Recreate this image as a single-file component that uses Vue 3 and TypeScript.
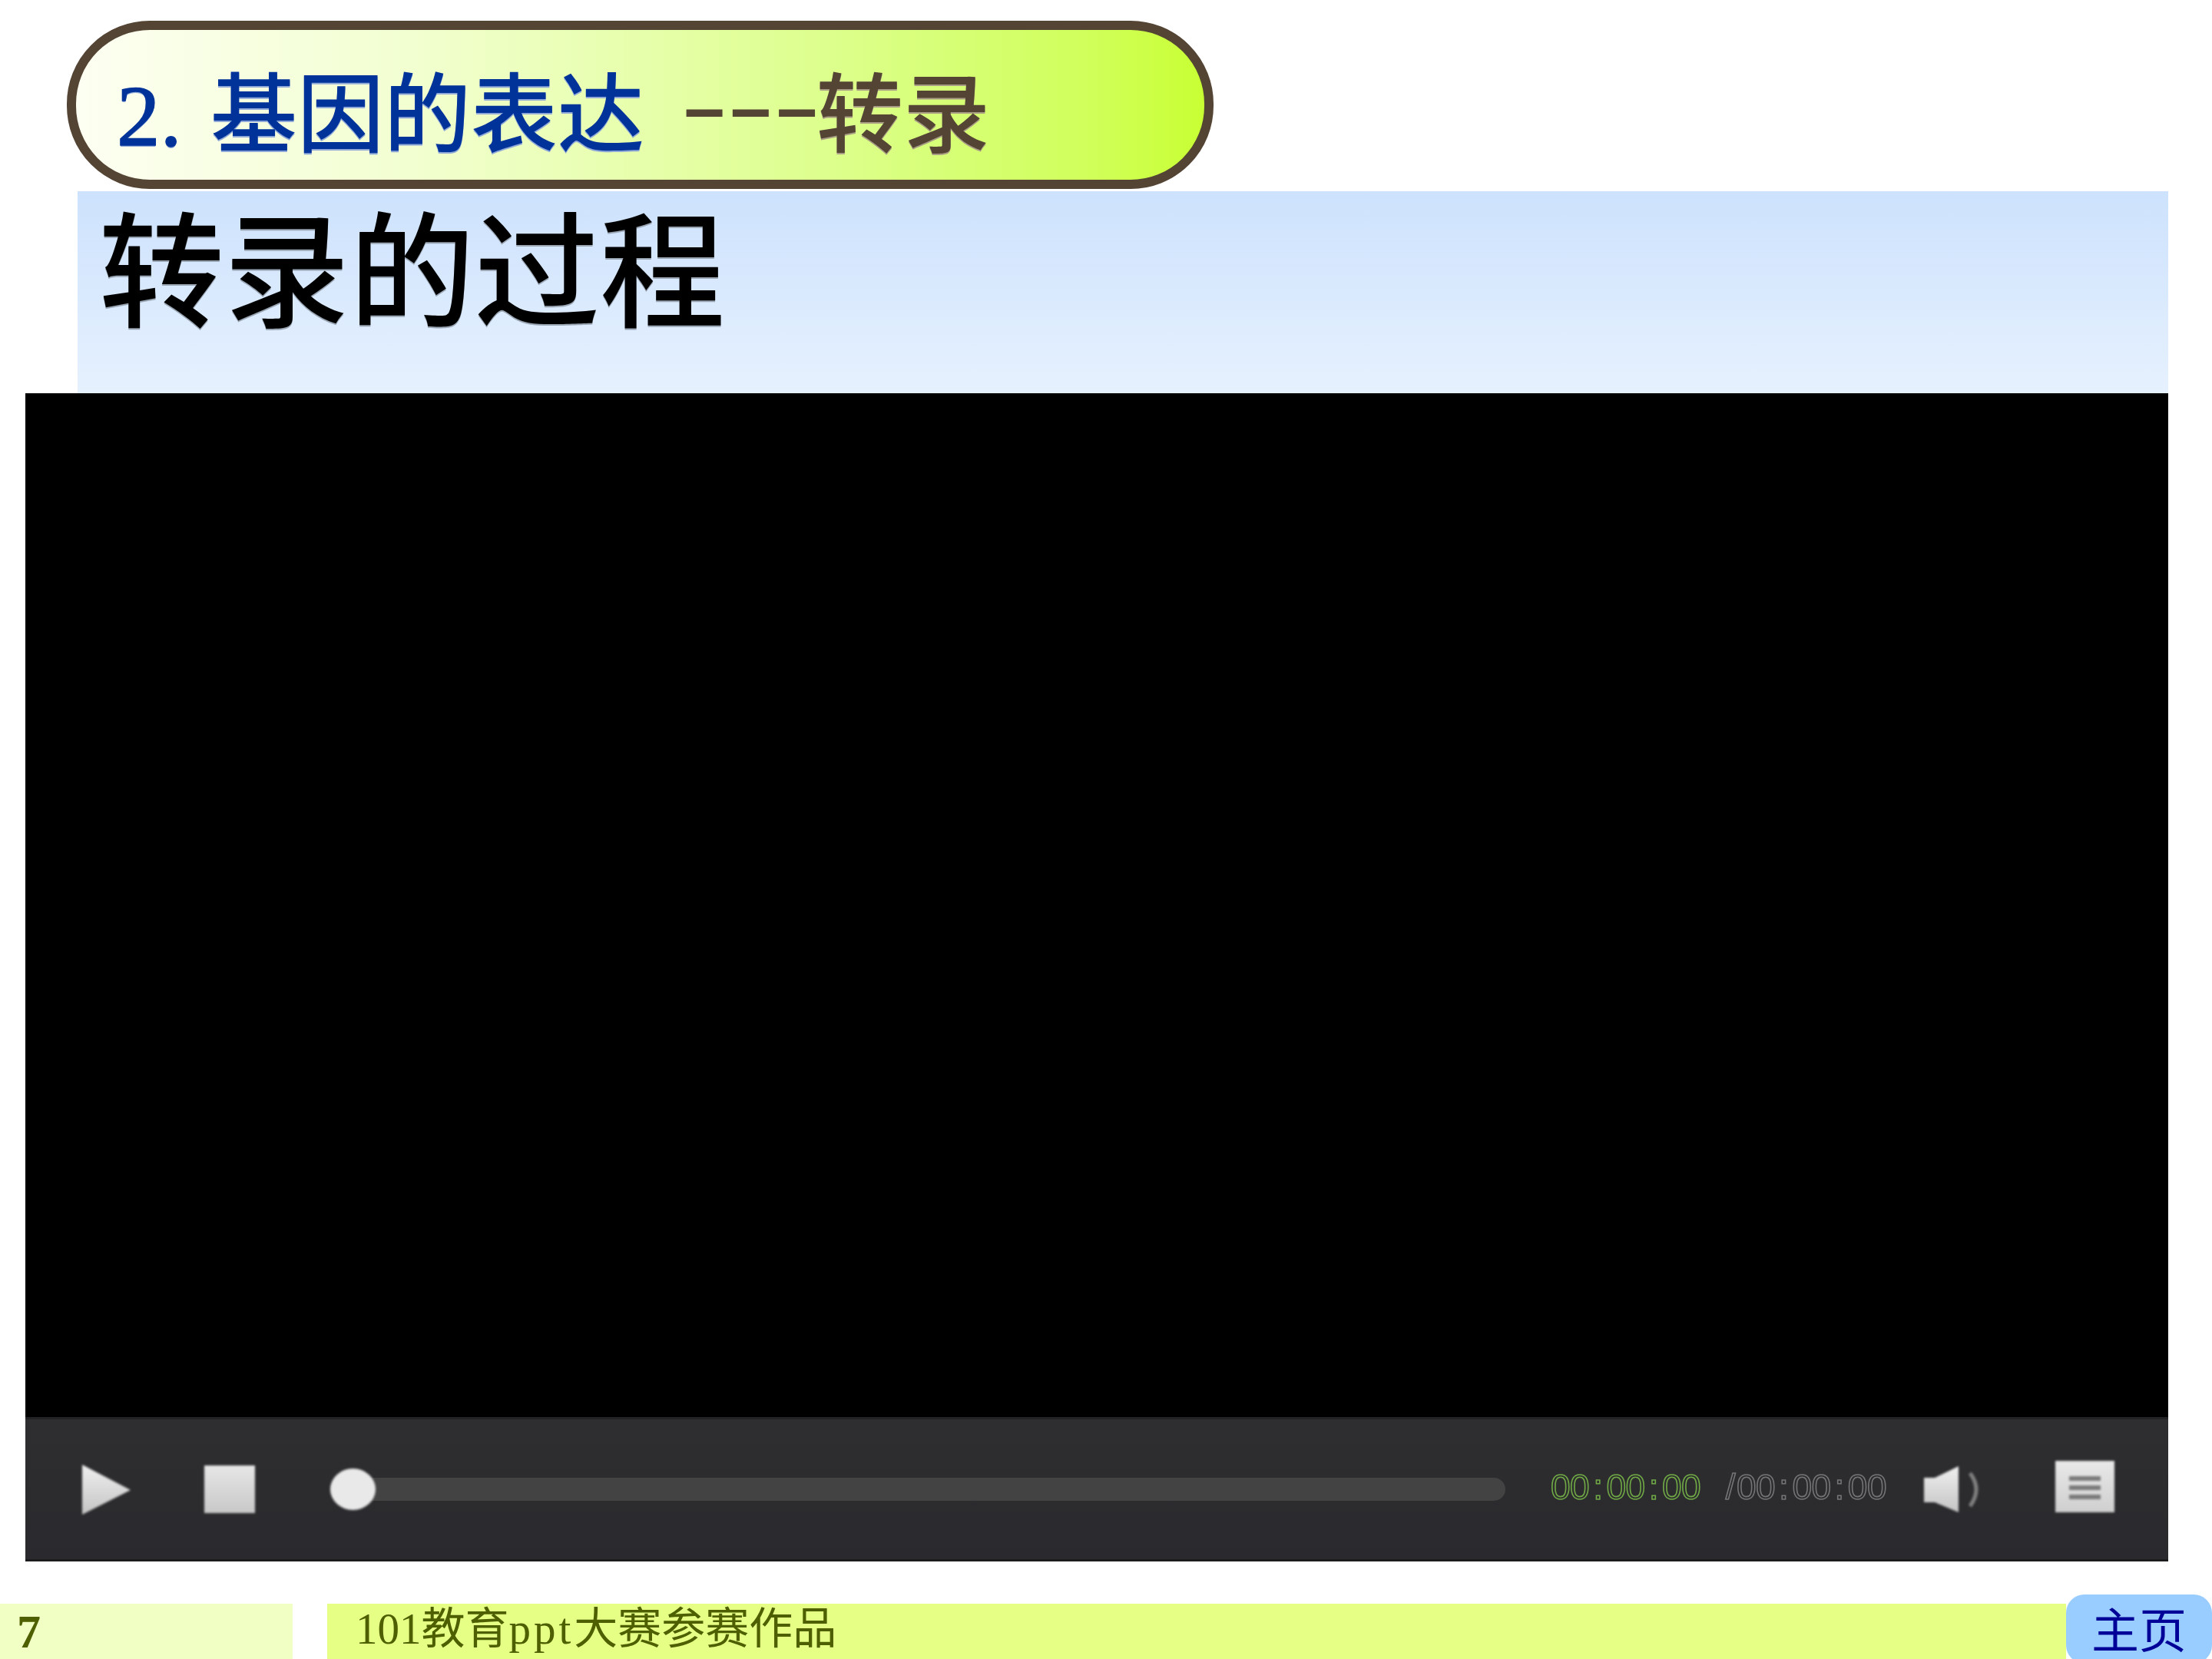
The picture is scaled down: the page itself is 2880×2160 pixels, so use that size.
<template>
  <div class="slide">
    <div class="pill">
      <span class="num">2.</span>
      <span class="blue">基因的表达</span>
      <span class="dashes">---</span>
      <span class="brown">转录</span>
    </div>

    <div class="panel">
      <h1 class="heading">转录的过程</h1>
    </div>

    <div class="video">
      <div class="screen"></div>
      <div class="controls">
        <svg class="play soft" viewBox="0 0 65 65">
          <defs>
            <linearGradient id="iconFill" x1="0" y1="0" x2="0" y2="1">
              <stop offset="0" stop-color="#efefef" />
              <stop offset="1" stop-color="#c4c4c4" />
            </linearGradient>
          </defs>
          <path d="M1 0 L64 33 L1 65 Z" fill="url(#iconFill)" />
        </svg>
        <div class="stop soft"></div>
        <div class="seek">
          <div class="knob soft"></div>
        </div>
        <div class="time">
          <span class="now">
            <template v-for="(seg, i) in parts(current)" :key="i"><span v-if="i" class="colon">:</span>{{ seg }}</template>
          </span>
          <span class="total">
            <span class="slash">/</span>
            <template v-for="(seg, i) in parts(total)" :key="i"><span v-if="i" class="colon">:</span>{{ seg }}</template>
          </span>
        </div>
        <svg class="speaker soft" viewBox="0 0 73 60">
          <path d="M0 15 H14 L45 0 V60 L14 47 H0 Z" fill="url(#iconFill)" />
          <path d="M60 9 Q76 30 60 52" fill="none" stroke="#808080" stroke-width="5" />
        </svg>
        <div class="menu soft">
          <i></i>
          <i></i>
          <i></i>
        </div>
      </div>
    </div>

    <div class="footer">
      <div class="page-no">7</div>
      <div class="credit">101教育<span class="latin">ppt</span>大赛参赛作品</div>
      <div class="home">主页</div>
    </div>
  </div>
</template>

<script setup lang="ts">
const current = '00:00:00'
const total = '00:00:00'

const parts = (t: string): string[] => t.split(':')
</script>

<style>
html,
body {
  margin: 0;
  background: #fff;
}
</style>

<style scoped>
.slide {
  width: 2880px;
  height: 2160px;
  display: flex;
  flex-direction: column;
  background: #fff;
  font-family: "Liberation Serif", "Noto Sans CJK SC", serif;
  overflow: hidden;
}

.pill {
  box-sizing: border-box;
  width: 1493px;
  height: 219px;
  margin: 27px 0 0 87px;
  padding: 28px 0 0 53px;
  display: flex;
  align-items: center;
  border: 12px solid #534434;
  border-radius: 108px;
  background: linear-gradient(90deg, #fdfff2 0%, #f2ffd0 30%, #dcff8a 68%, #d0ff5a 90%, #c8ff33 100%);
  font-size: 113px;
  font-weight: 500;
  line-height: 1;
  white-space: nowrap;
}

.num,
.blue {
  color: #003399;
  text-shadow: 0 2px 0 #8fa8d8;
}

.num {
  width: 122px;
  font-weight: 400;
  -webkit-text-stroke: 1.5px #003399;
}

.blue {
  width: 613px;
}

.dashes {
  display: inline-block;
  width: 176px;
  color: #534434;
  font-weight: 700;
  transform: translateY(-15px) scaleX(1.6);
  transform-origin: left center;
}

.brown {
  color: #534434;
  text-shadow: 0 2px 0 #a89c84;
}

.panel {
  box-sizing: border-box;
  height: 263px;
  margin: 3px 57px 0 101px;
  padding: 14px 0 0 28px;
  background: linear-gradient(180deg, #cde2fd 0%, #e6f1fe 100%);
}

.heading {
  margin: 0;
  color: #000;
  font-size: 163px;
  font-weight: 500;
  line-height: 190px;
  text-shadow: 0 2px 0 #9aa6b4;
}

.video {
  height: 1521px;
  margin: 0 57px 0 33px;
  display: flex;
  flex-direction: column;
}

.screen {
  flex: 1;
  background: #000;
}

.controls {
  box-sizing: border-box;
  height: 188px;
  padding: 0 70px 0 73px;
  display: flex;
  align-items: center;
  border-top: 3px solid #222225;
  border-bottom: 3px solid #1c1c1e;
  background: linear-gradient(180deg, #2e2e30 0%, #2a2a2e 100%);
}

.soft {
  filter: blur(1.5px);
}

.play {
  flex: none;
  width: 65px;
  height: 65px;
}

.stop {
  flex: none;
  width: 66px;
  height: 62px;
  margin-left: 95px;
  background: linear-gradient(180deg, #e6e6e6 0%, #c8c8c8 100%);
}

.seek {
  flex: 1;
  height: 30px;
  margin-left: 98px;
  display: flex;
  align-items: center;
  border-radius: 15px;
  background: #434343;
}

.knob {
  flex: none;
  width: 59px;
  height: 54px;
  border-radius: 50%;
  background: #e9e9e9;
}

.time {
  flex: none;
  width: 437px;
  margin-left: 59px;
  margin-top: -6px;
  display: flex;
  justify-content: space-between;
  filter: blur(0.6px);
  font-family: "Liberation Sans", sans-serif;
  font-size: 46px;
  line-height: 1;
  letter-spacing: -0.5px;
  color: transparent;
  -webkit-text-stroke: 1.6px #6fa845;
}

.total {
  -webkit-text-stroke: 1.6px #747476;
}

.colon {
  margin: 0 5px;
}

.slash {
  margin-right: 2px;
}

.speaker {
  flex: none;
  width: 73px;
  height: 60px;
  margin-left: 49px;
}

.menu {
  box-sizing: border-box;
  flex: none;
  width: 77px;
  height: 67px;
  margin-left: 98px;
  margin-top: -8px;
  padding: 4px 18px 0;
  display: flex;
  flex-direction: column;
  justify-content: center;
  gap: 6px;
  background: linear-gradient(180deg, #e8e8e8 0%, #cfcfcf 100%);
}

.menu i {
  height: 6px;
  background: #7a7a7a;
}

.footer {
  height: 84px;
  margin-top: 43px;
  display: flex;
  align-items: flex-end;
  color: #4d5f00;
}

.page-no,
.credit {
  box-sizing: border-box;
  height: 72px;
  font-size: 57px;
  line-height: 66px;
}

.page-no {
  width: 381px;
  padding-left: 22px;
  background: #f2ffc4;
  font-size: 62px;
  font-weight: 700;
  line-height: 72px;
}

.credit {
  width: 2264px;
  margin-left: 45px;
  padding-left: 37px;
  background: #e6ff85;
  white-space: nowrap;
}

.latin {
  letter-spacing: 4px;
}

.home {
  box-sizing: border-box;
  flex: none;
  width: 190px;
  height: 90px;
  margin-bottom: -6px;
  padding-top: 18px;
  border-radius: 24px;
  background: #99ccff;
  color: #000099;
  font-size: 62px;
  line-height: 62px;
  text-align: center;
}
</style>
